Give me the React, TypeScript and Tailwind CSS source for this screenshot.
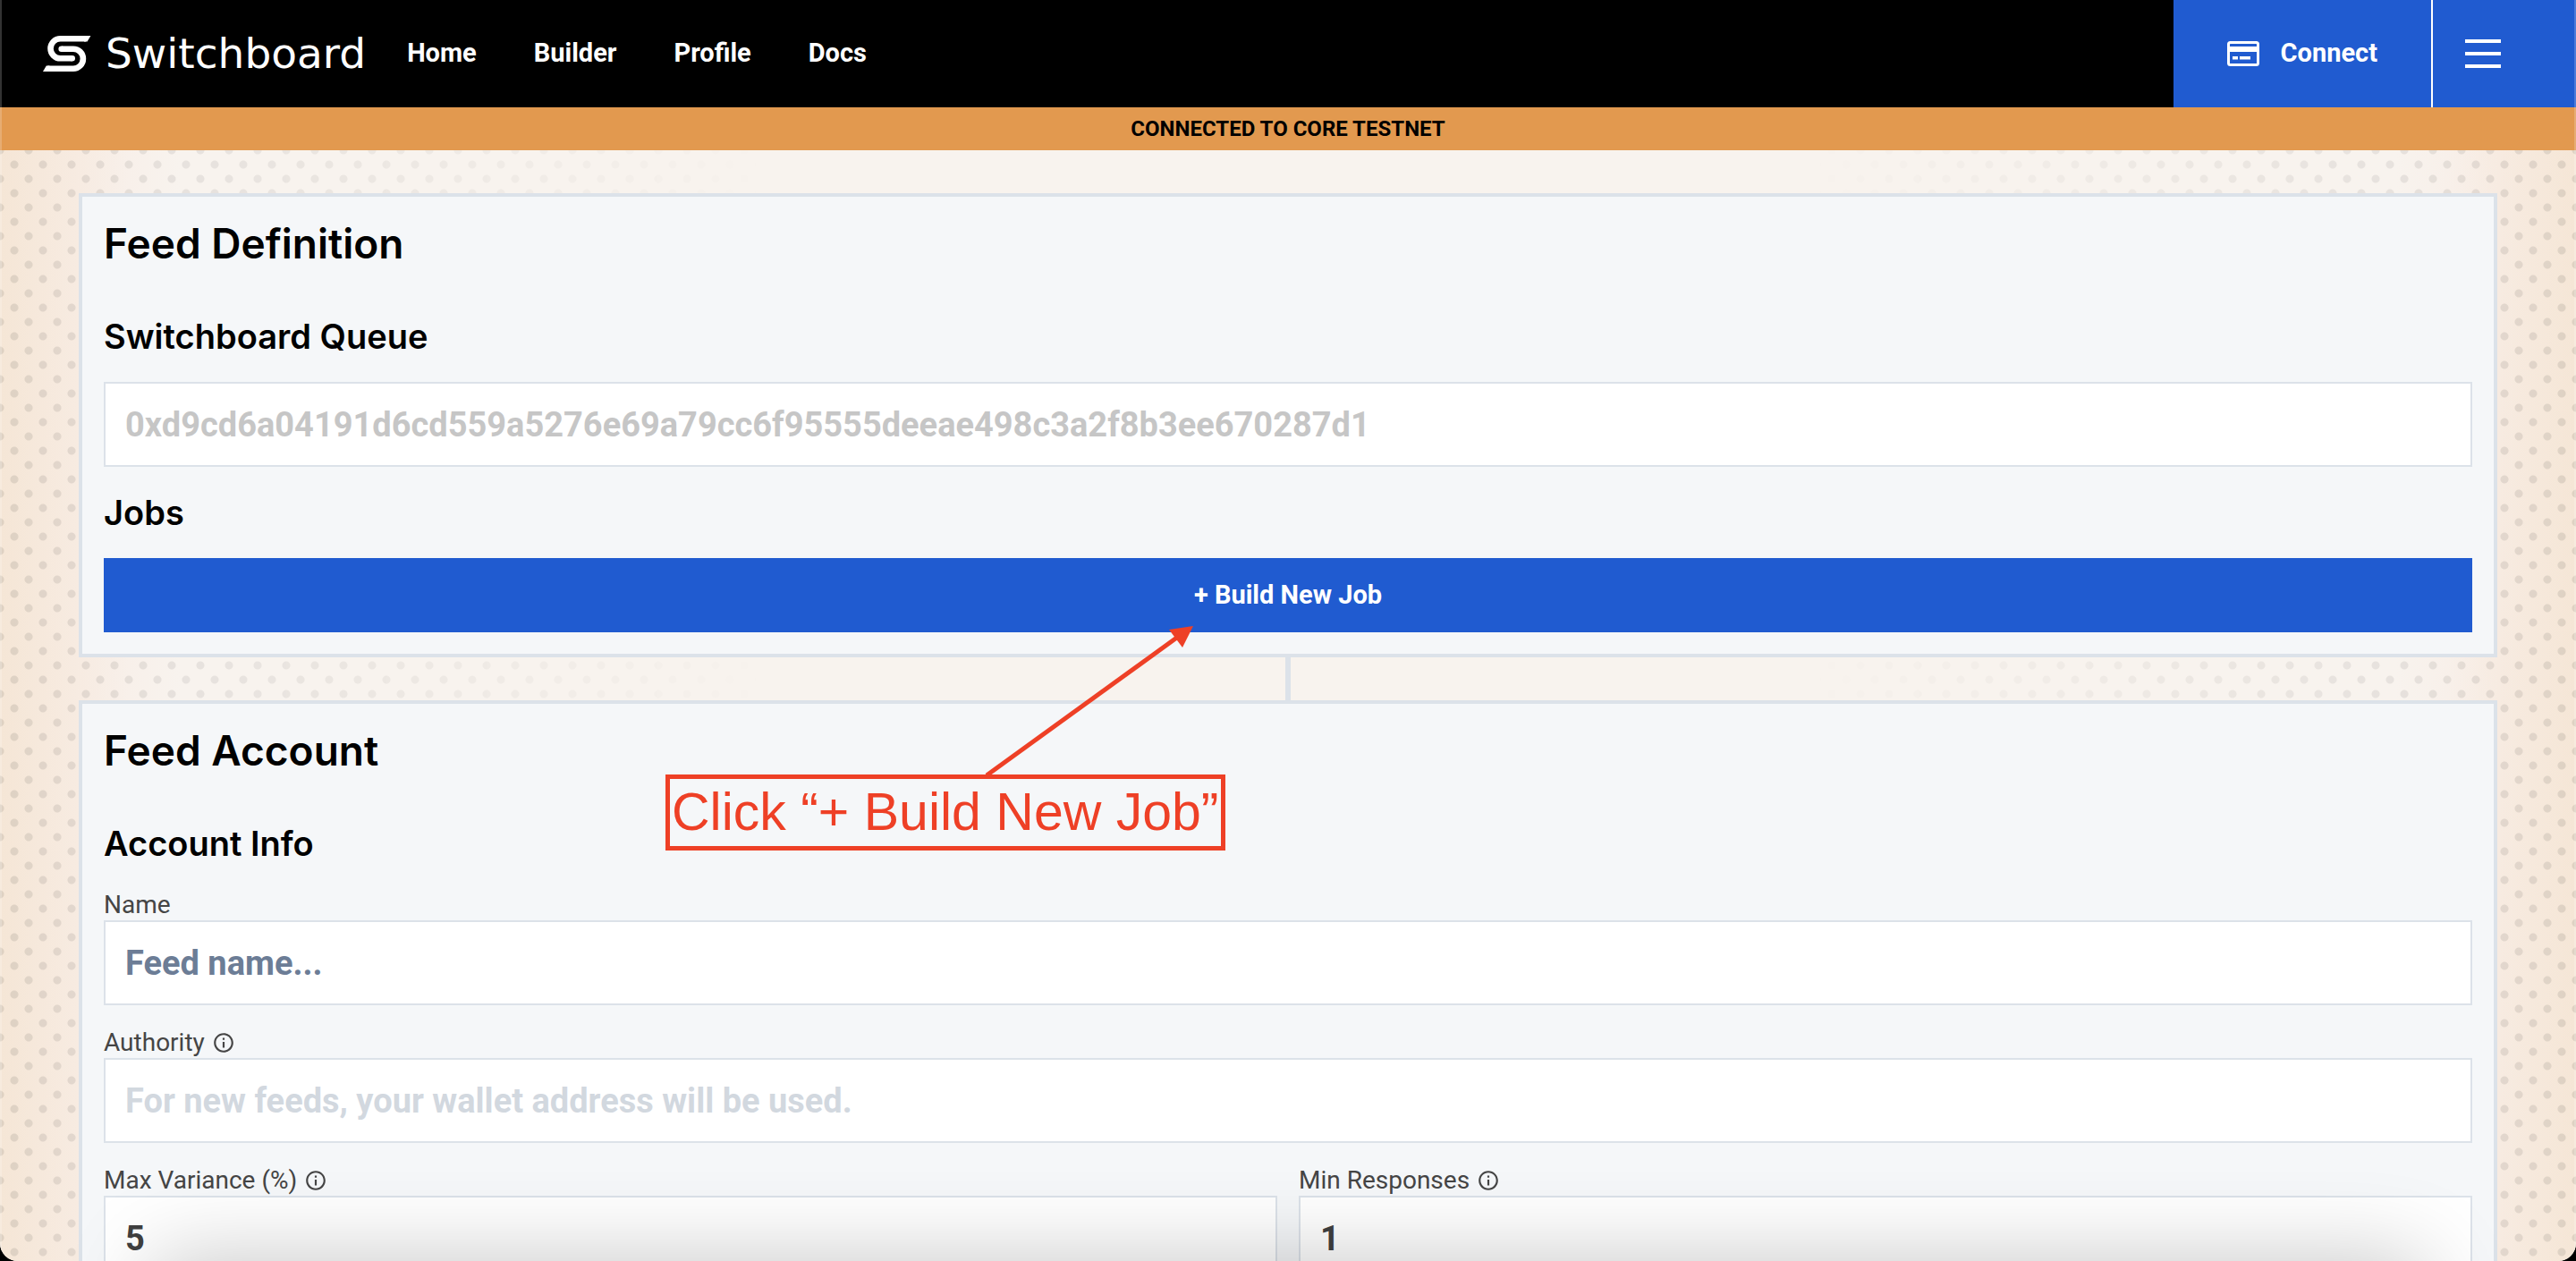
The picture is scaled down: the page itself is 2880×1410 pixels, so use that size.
import React, { useId } from "react";
import type { InputHTMLAttributes, ReactNode } from "react";
import { MdOutlineInfo } from "react-icons/md";

const NAV_LINKS = ["Home", "Builder", "Profile", "Docs"];

function LogoHalf() {
  return (
    <>
      <path d="M48 3.3H19.5A11 11 0 0 0 19.5 25.3H32.5" stroke="white" strokeWidth="6.6" />
      <circle cx="32.7" cy="25.3" r="3.3" fill="white" />
      <path d="M46 0H53.4L49.6 6.6H46Z" fill="white" />
    </>
  );
}

function LogoMark() {
  return (
    <svg viewBox="0 0 54 40" className="h-10 w-[54px]" fill="none" aria-hidden="true">
      <LogoHalf />
      <g transform="rotate(180 26.7 20)">
        <LogoHalf />
      </g>
    </svg>
  );
}

function CardIcon() {
  return (
    <svg viewBox="0 0 36 28" className="h-7 w-9" fill="none" aria-hidden="true">
      <rect x="1.5" y="1.5" width="33" height="25" rx="2" stroke="white" strokeWidth="3" />
      <path d="M2 6H34V12H2ZM6 17H12V20.5H6ZM14 17H26V20.5H14Z" fill="white" />
    </svg>
  );
}

function Header() {
  return (
    <header className="flex h-[120px] shrink-0 items-stretch justify-between bg-black text-[29px] font-bold text-white">
      <div className="flex items-center pl-12">
        <a href="#" className="flex items-center gap-4">
          <LogoMark />
          <span className="font-['DejaVu_Sans'] text-[47px] leading-[52px] font-normal">Switchboard</span>
        </a>
        <nav className="ml-[46px] flex gap-16">
          {NAV_LINKS.map((link) => (
            <a key={link} href="#">
              {link}
            </a>
          ))}
        </nav>
      </div>
      <div className="flex bg-[#205bd0]">
        <button type="button" className="flex items-center gap-6 border-r-2 border-white px-[60px]">
          <CardIcon />
          Connect
        </button>
        <button type="button" aria-label="Menu" className="flex w-40 flex-col justify-center gap-2.5 pl-9">
          <span className="h-1 w-10 bg-white" />
          <span className="h-1 w-10 bg-white" />
          <span className="h-1 w-10 bg-white" />
        </button>
      </div>
    </header>
  );
}

function Card({ title, children }: { title: string; children: ReactNode }) {
  return (
    <section className="border-4 border-[#dce2e9] bg-[#f5f7f9] p-6">
      <h2 className="mb-[51px] font-[Inter] text-[46px] leading-[56px] font-semibold">{title}</h2>
      {children}
    </section>
  );
}

function SectionHeading({ children }: { children: ReactNode }) {
  return <h3 className="mb-[26px] font-[Inter] text-[38px] leading-[50px] font-semibold">{children}</h3>;
}

function TextInput({ className = "", ...props }: InputHTMLAttributes<HTMLInputElement>) {
  return (
    <input
      type="text"
      className={
        "block h-[95px] w-full border-2 border-[#dce2e9] bg-white px-[22px] text-[38px] font-bold outline-none " +
        className
      }
      {...props}
    />
  );
}

type FieldProps = InputHTMLAttributes<HTMLInputElement> & { label: string; info?: boolean };

function Field({ label, info, ...props }: FieldProps) {
  const id = useId();
  return (
    <div>
      <label htmlFor={id} className="flex h-[35px] items-center gap-2 text-[28px] text-[#454545]">
        {label}
        {info && <MdOutlineInfo className="size-[26px]" />}
      </label>
      <TextInput id={id} {...props} />
    </div>
  );
}

function Callout() {
  return (
    <div className="pointer-events-none absolute top-[866px] left-[744px] border-[5px] border-[#ee4026] px-0.5 font-['Liberation_Sans'] text-[59px] leading-[75px] whitespace-nowrap text-[#ee4026]">
      Click “+ Build New Job”
      <svg viewBox="0 0 240 170" className="absolute -top-[174px] left-[350px] h-[170px] w-[240px]" aria-hidden="true">
        <path d="M4 170L218 15" stroke="#ee4026" strokeWidth="5" />
        <path d="M235 3L208 7L223 27Z" fill="#ee4026" />
      </svg>
    </div>
  );
}

export default function App() {
  return (
    <div className="h-screen bg-black">
      <div className="relative flex h-full flex-col overflow-hidden rounded-b-[20px] bg-[#f8f3ee] font-[Roboto] text-black">
        <Header />
        <div className="h-12 shrink-0 bg-[#e2994f] text-center text-2xl leading-[48px] font-bold uppercase">
          Connected to core testnet
        </div>
        <main className="relative flex-1 bg-[linear-gradient(to_right,#f5e6d6,#f7ebe1_3%,#f8f0ea_5%,#f8f3ee_7%,#f8f3ee_93%,#f8f0ea_95%,#f7ebe1_97%,#f5e6d6)] px-[88px] pt-12">
          <div className="absolute inset-0 bg-[radial-gradient(circle,rgba(0,0,0,0.09)_4px,transparent_5px),radial-gradient(circle,rgba(0,0,0,0.09)_4px,transparent_5px)] mask-[linear-gradient(to_right,black,transparent_30%,transparent_70%,black)] bg-[length:32px_32px] bg-[position:0_0,16px_16px]" />
          <div className="relative">
            <Card title="Feed Definition">
              <SectionHeading>Switchboard Queue</SectionHeading>
              <TextInput
                disabled
                aria-label="Switchboard Queue"
                className="mb-[26px] text-[#c6c6c6]"
                defaultValue="0xd9cd6a04191d6cd559a5276e69a79cc6f95555deeae498c3a2f8b3ee670287d1"
              />
              <SectionHeading>Jobs</SectionHeading>
              <button type="button" className="block h-[83px] w-full bg-[#205bd0] text-[29px] font-bold text-white">
                + Build New Job
              </button>
            </Card>
            <div className="mx-auto h-12 w-1.5 bg-[#dce2e9]" />
            <Card title="Feed Account">
              <SectionHeading>Account Info</SectionHeading>
              <div className="flex flex-col gap-6">
                <Field label="Name" placeholder="Feed name..." className="placeholder:text-[#6c7d96]" />
                <Field
                  label="Authority"
                  info
                  disabled
                  placeholder="For new feeds, your wallet address will be used."
                  className="placeholder:text-[#d2d8df]"
                />
                <div className="grid grid-cols-2 gap-6">
                  <Field label="Max Variance (%)" info defaultValue="5" className="text-[#404040]" />
                  <Field label="Min Responses" info defaultValue="1" className="text-[#404040]" />
                </div>
              </div>
            </Card>
          </div>
        </main>
        <div className="pointer-events-none absolute inset-x-[170px] -bottom-[200px] h-[200px] shadow-[0_0_100px_rgba(0,0,0,0.23)]" />
        <div className="pointer-events-none absolute inset-0 border-x-2 border-white/20" />
        <Callout />
      </div>
    </div>
  );
}
